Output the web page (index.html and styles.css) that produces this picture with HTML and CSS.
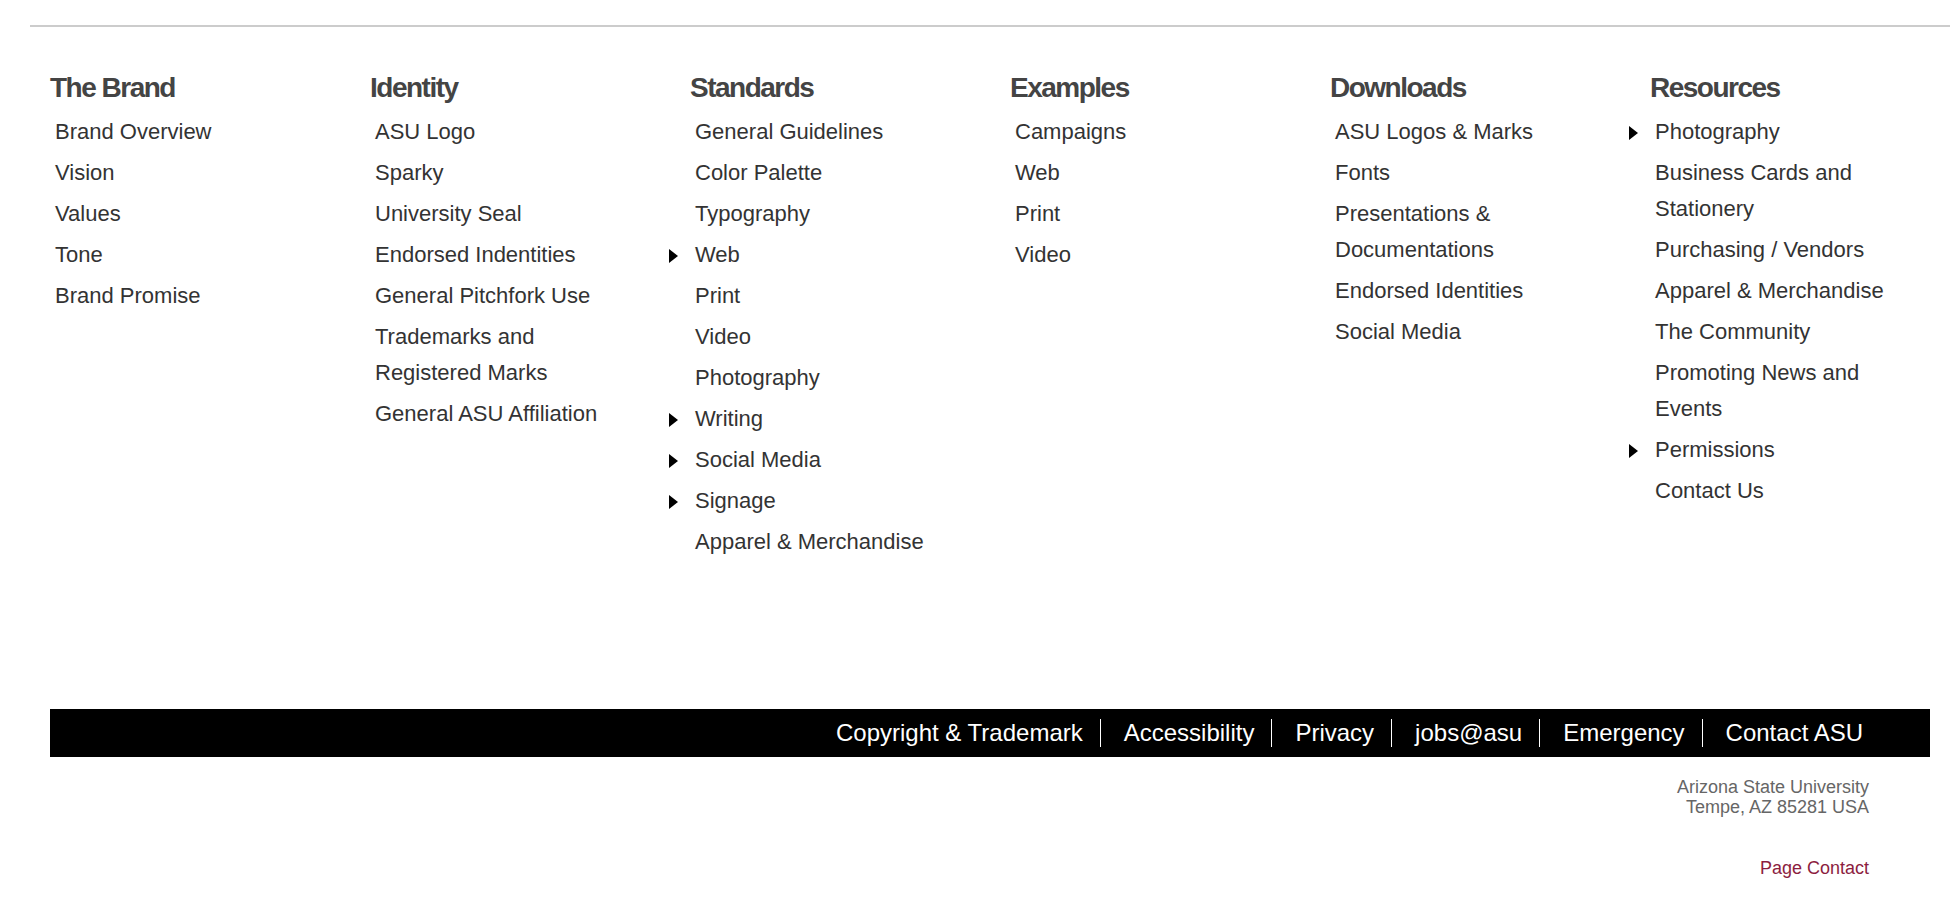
FILE: index.html
```html
<!DOCTYPE html>
<html lang="en">
<head>
<meta charset="utf-8">
<title>ASU Brand Guide – Footer</title>
<link rel="stylesheet" href="styles.css">
</head>
<body>
<div class="rule"></div>
<nav class="columns">
  <section class="col">
    <h2>The Brand</h2>
    <ul>
      <li>Brand Overview</li>
      <li>Vision</li>
      <li>Values</li>
      <li>Tone</li>
      <li>Brand Promise</li>
    </ul>
  </section>
  <section class="col">
    <h2>Identity</h2>
    <ul>
      <li>ASU Logo</li>
      <li>Sparky</li>
      <li>University Seal</li>
      <li>Endorsed Indentities</li>
      <li>General Pitchfork Use</li>
      <li>Trademarks and<br>Registered Marks</li>
      <li>General ASU Affiliation</li>
    </ul>
  </section>
  <section class="col">
    <h2>Standards</h2>
    <ul>
      <li>General Guidelines</li>
      <li>Color Palette</li>
      <li>Typography</li>
      <li class="has-sub">Web</li>
      <li>Print</li>
      <li>Video</li>
      <li>Photography</li>
      <li class="has-sub">Writing</li>
      <li class="has-sub">Social Media</li>
      <li class="has-sub">Signage</li>
      <li>Apparel &amp; Merchandise</li>
    </ul>
  </section>
  <section class="col">
    <h2>Examples</h2>
    <ul>
      <li>Campaigns</li>
      <li>Web</li>
      <li>Print</li>
      <li>Video</li>
    </ul>
  </section>
  <section class="col">
    <h2>Downloads</h2>
    <ul>
      <li>ASU Logos &amp; Marks</li>
      <li>Fonts</li>
      <li>Presentations &amp;<br>Documentations</li>
      <li>Endorsed Identities</li>
      <li>Social Media</li>
    </ul>
  </section>
  <section class="col">
    <h2>Resources</h2>
    <ul>
      <li class="has-sub">Photography</li>
      <li>Business Cards and<br>Stationery</li>
      <li>Purchasing / Vendors</li>
      <li>Apparel &amp; Merchandise</li>
      <li>The Community</li>
      <li>Promoting News and<br>Events</li>
      <li class="has-sub">Permissions</li>
      <li>Contact Us</li>
    </ul>
  </section>
</nav>
<footer class="footer">
  <ul class="bar">
    <li>Copyright &amp; Trademark</li>
    <li>Accessibility</li>
    <li>Privacy</li>
    <li>jobs@asu</li>
    <li>Emergency</li>
    <li>Contact ASU</li>
  </ul>
  <address class="address">Arizona State University<br>Tempe, AZ 85281 USA</address>
  <div class="page-contact">Page Contact</div>
</footer>
</body>
</html>
```

FILE: styles.css
```css
html, body {
  margin: 0;
  padding: 0;
  background: #fff;
}

body {
  font-family: "Liberation Sans", Arial, Helvetica, sans-serif;
  color: #333;
}

.rule {
  height: 2px;
  background: #cccccc;
  margin: 25px 10px 0 30px;
}

.columns {
  display: grid;
  grid-template-columns: repeat(5, 320px) 1fr;
  margin: 45px 30px 0 50px;
}

.col h2 {
  margin: 0;
  font-size: 28px;
  line-height: 32px;
  font-weight: bold;
  letter-spacing: -1.5px;
  color: #444;
}

.col ul {
  list-style: none;
  margin: 10px 0 0 0;
  padding: 0;
  display: flex;
  flex-direction: column;
  gap: 5px;
}

.col li {
  position: relative;
  padding-left: 5px;
  font-size: 22px;
  line-height: 36px;
  color: #333;
}

.col li.has-sub::before {
  content: "";
  position: absolute;
  left: -21px;
  top: 12px;
  width: 0;
  height: 0;
  border-left: 9px solid #000;
  border-top: 7px solid transparent;
  border-bottom: 7px solid transparent;
}

.footer {
  margin: 149px 30px 0 50px;
}

.bar {
  list-style: none;
  margin: 0;
  padding: 0 67px 0 0;
  height: 48px;
  background: #000;
  display: flex;
  justify-content: flex-end;
  align-items: center;
}

.bar li {
  color: #fff;
  font-size: 24px;
  line-height: 28px;
  padding: 0 17px 0 23px;
  border-left: 1px solid #fff;
}

.bar li:first-child {
  border-left: none;
}

.bar li:last-child {
  padding-right: 0;
}

.address {
  font-style: normal;
  text-align: right;
  font-size: 18px;
  line-height: 20px;
  color: #666;
  margin: 20px 61px 0 0;
}

.page-contact {
  text-align: right;
  font-size: 18px;
  line-height: 20px;
  color: #8c1d40;
  margin: 41px 61px 0 0;
}
```
